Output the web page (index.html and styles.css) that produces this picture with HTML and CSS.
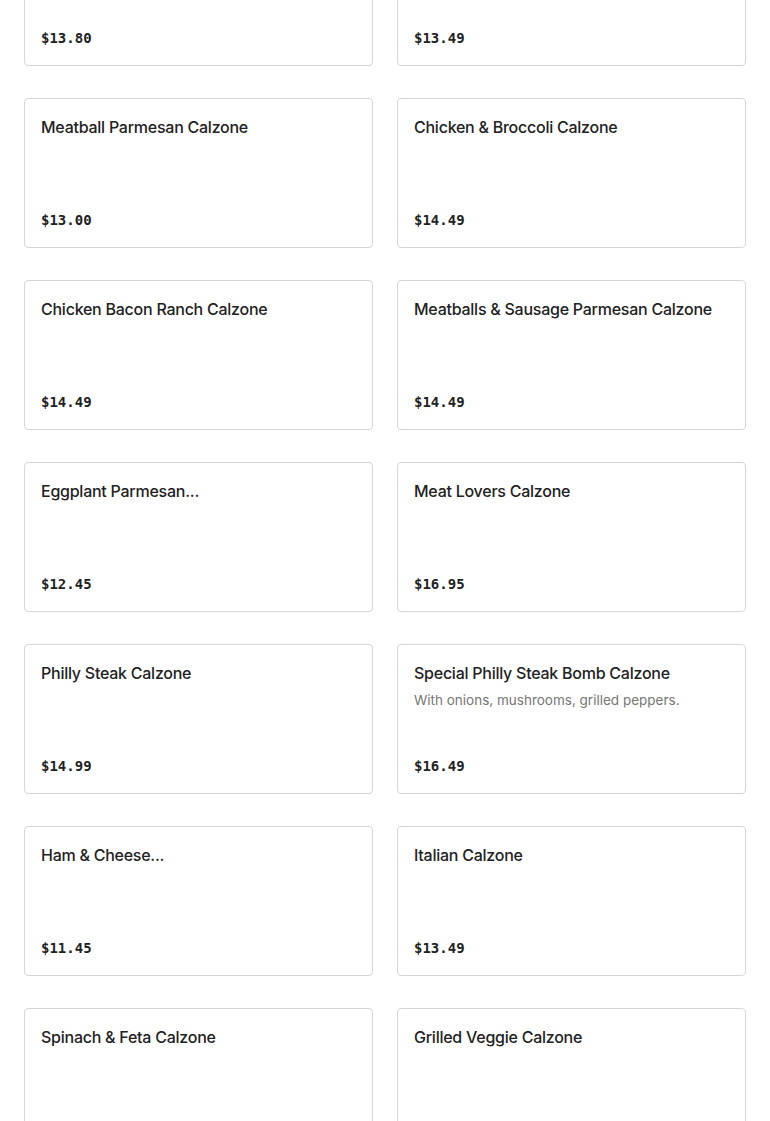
FILE: index.html
```html
<!DOCTYPE html>
<html lang="en">
<head>
<meta charset="utf-8">
<title>Calzones</title>
<link rel="stylesheet" href="styles.css">
</head>
<body>
<div class="menu-grid">
  <div class="card"><div class="info"><div class="title">Cheese Calzone</div></div><div class="price">$13.80</div></div>
  <div class="card"><div class="info"><div class="title">Sausage Calzone</div></div><div class="price">$13.49</div></div>
  <div class="card"><div class="info"><div class="title">Meatball Parmesan Calzone</div></div><div class="price">$13.00</div></div>
  <div class="card"><div class="info"><div class="title">Chicken &amp; Broccoli Calzone</div></div><div class="price">$14.49</div></div>
  <div class="card"><div class="info"><div class="title">Chicken Bacon Ranch Calzone</div></div><div class="price">$14.49</div></div>
  <div class="card"><div class="info"><div class="title">Meatballs &amp; Sausage Parmesan Calzone</div></div><div class="price">$14.49</div></div>
  <div class="card"><div class="info"><div class="title">Eggplant Parmesan...</div></div><div class="price">$12.45</div></div>
  <div class="card"><div class="info"><div class="title">Meat Lovers Calzone</div></div><div class="price">$16.95</div></div>
  <div class="card"><div class="info"><div class="title">Philly Steak Calzone</div></div><div class="price">$14.99</div></div>
  <div class="card"><div class="info"><div class="title">Special Philly Steak Bomb Calzone</div><div class="desc">With onions, mushrooms, grilled peppers.</div></div><div class="price">$16.49</div></div>
  <div class="card"><div class="info"><div class="title">Ham &amp; Cheese...</div></div><div class="price">$11.45</div></div>
  <div class="card"><div class="info"><div class="title">Italian Calzone</div></div><div class="price">$13.49</div></div>
  <div class="card"><div class="info"><div class="title">Spinach &amp; Feta Calzone</div></div><div class="price">$13.49</div></div>
  <div class="card"><div class="info"><div class="title">Grilled Veggie Calzone</div></div><div class="price">$13.49</div></div>
</div>
</body>
</html>
```
FILE: styles.css
```css
html, body {
  margin: 0;
  padding: 0;
  background: #ffffff;
}
body {
  font-family: Inter, "Noto Sans", "Liberation Sans", sans-serif;
  color: #191919;
  overflow: hidden;
}
.menu-grid {
  display: grid;
  grid-template-columns: 1fr 1fr;
  column-gap: 24px;
  row-gap: 32px;
  padding: 0 24px;
  margin-top: -84px;
}
.card {
  box-sizing: border-box;
  height: 150px;
  border: 1px solid #d6d6d6;
  border-radius: 4px;
  padding: 16px;
  display: flex;
  flex-direction: column;
  justify-content: space-between;
}
.title {
  font-size: 16px;
  font-weight: 500;
  line-height: 24px;
  letter-spacing: -0.25px;
  color: #222222;
}
.desc {
  margin-top: 5px;
  font-size: 13.5px;
  line-height: 20px;
  color: #767676;
}
.price {
  font-family: "DejaVu Sans Mono", "Liberation Mono", monospace;
  font-size: 14px;
  line-height: 22px;
  font-weight: 600;
  color: #222222;
}
```
